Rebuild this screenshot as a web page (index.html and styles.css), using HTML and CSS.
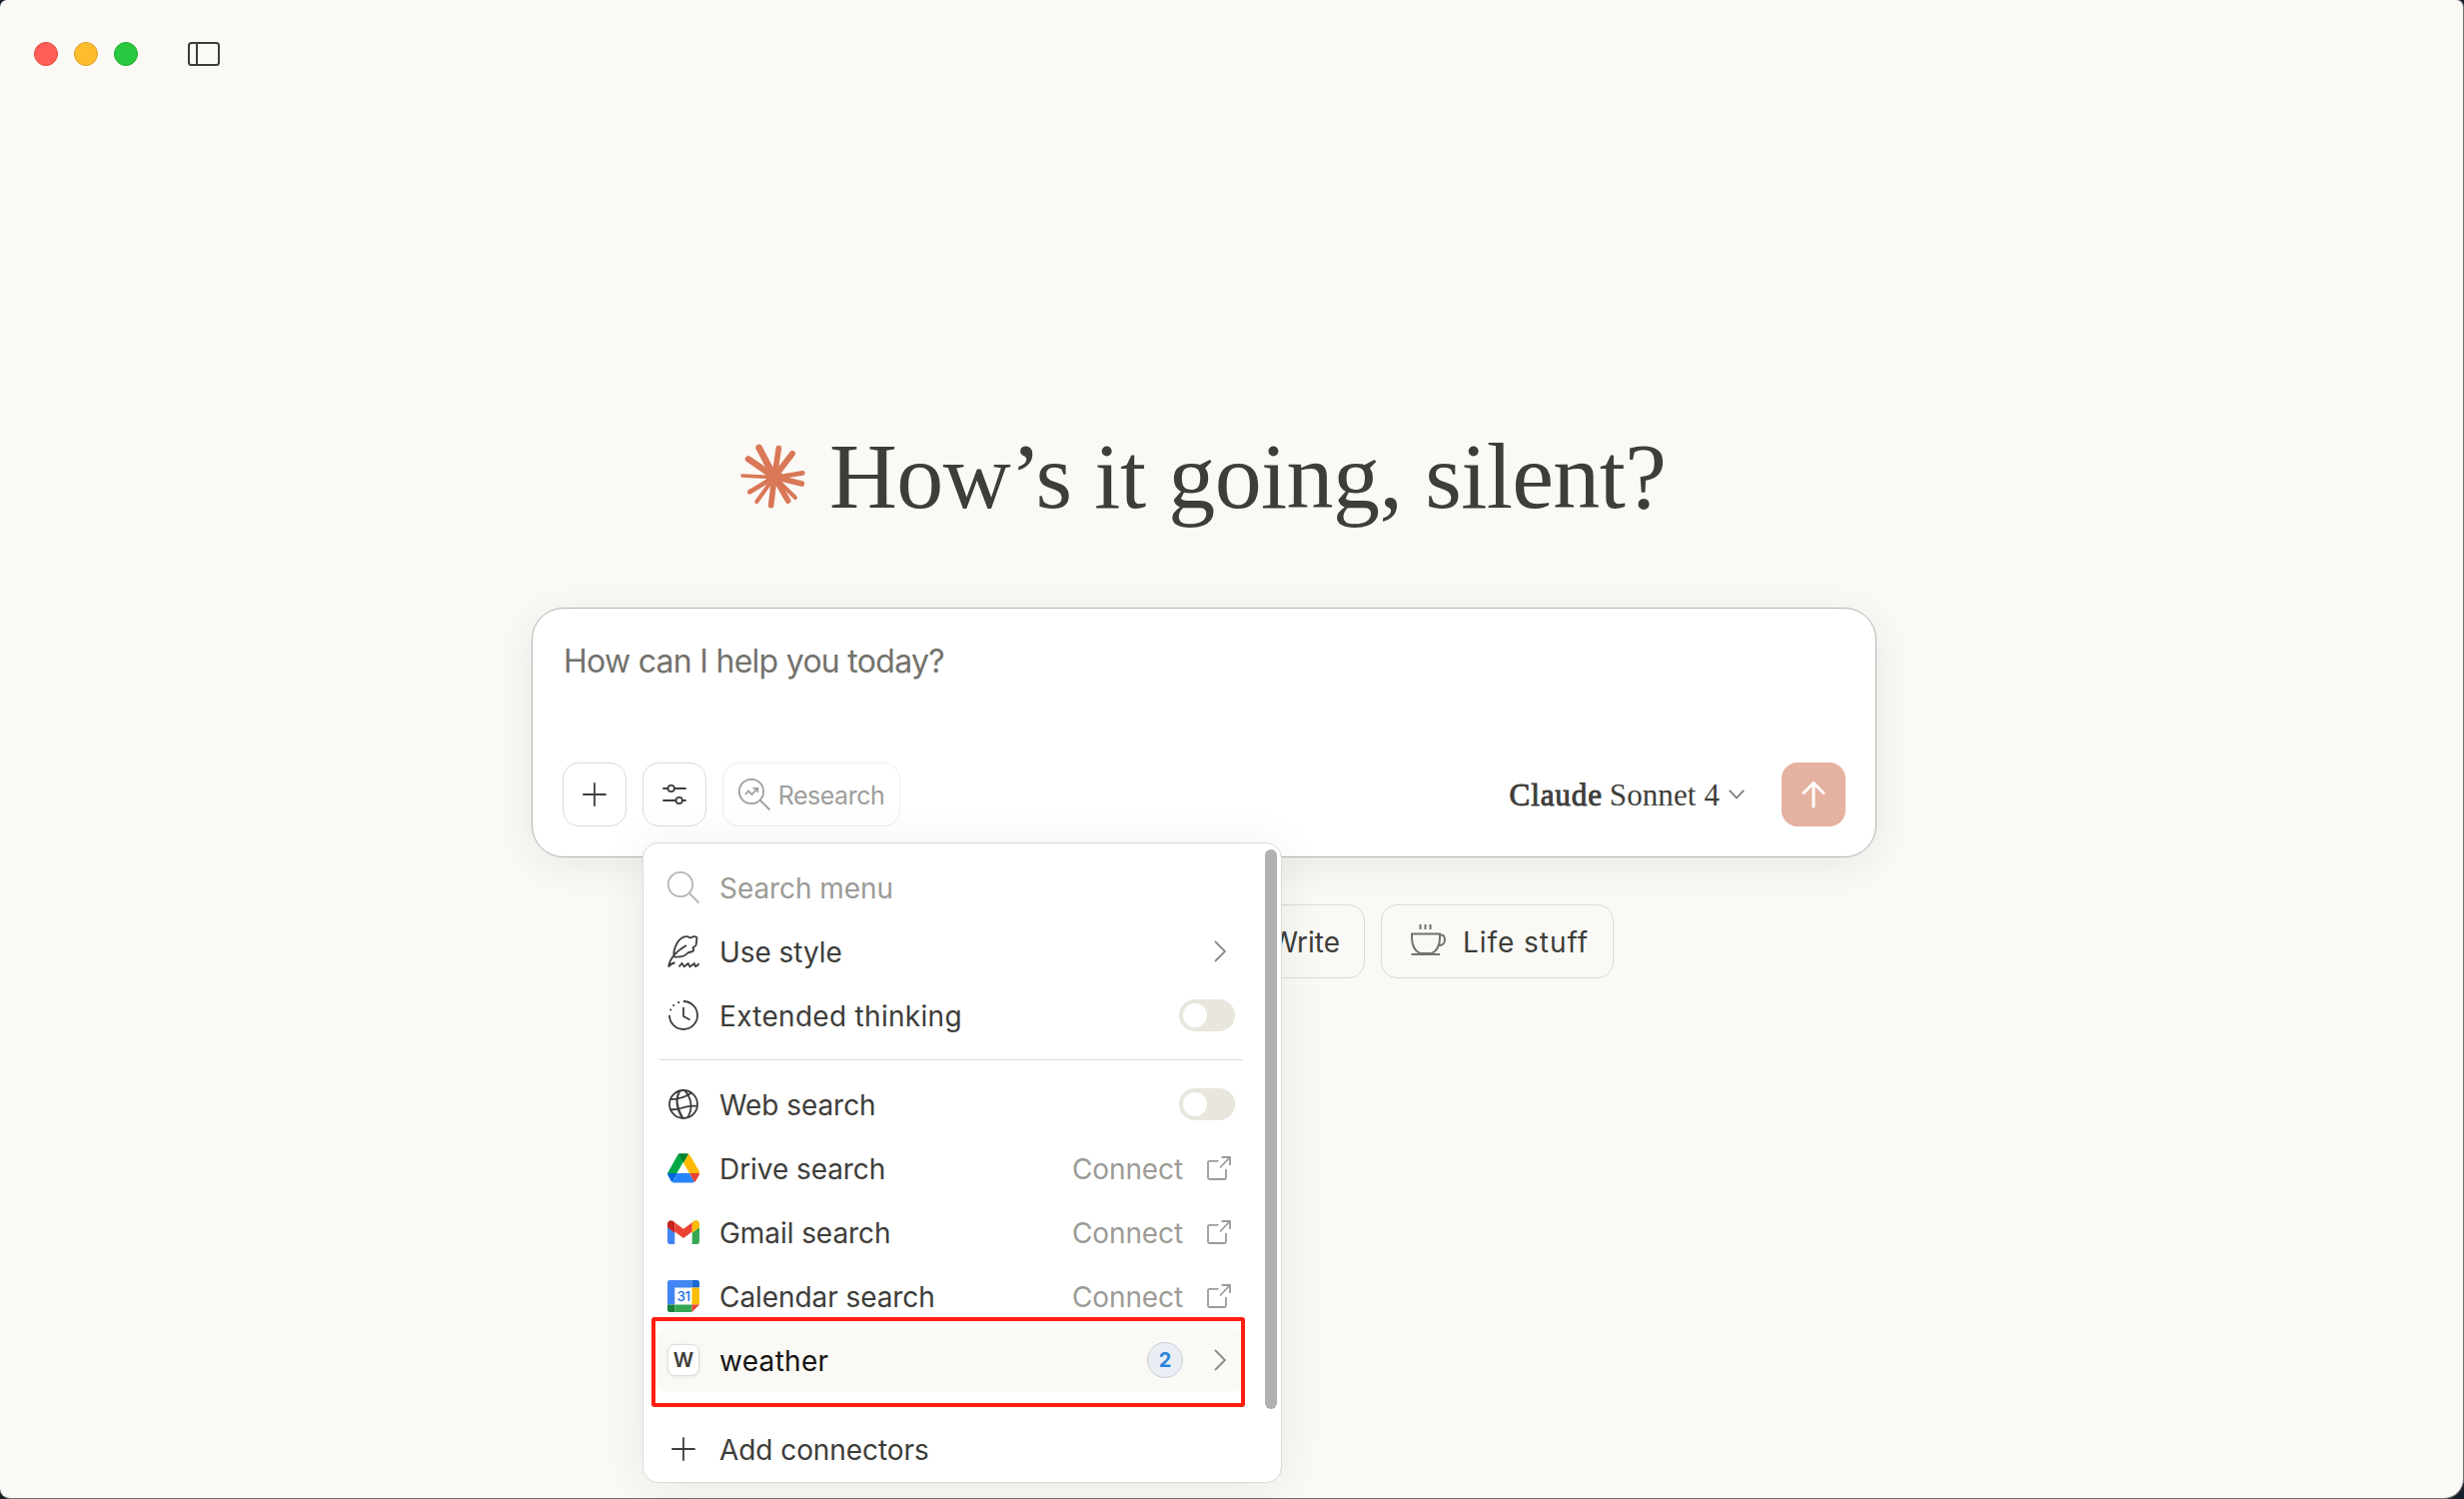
FILE: index.html
```html
<!DOCTYPE html>
<html lang="en">
<head>
<meta charset="utf-8">
<title>Claude</title>
<link rel="stylesheet" href="styles.css">
</head>
<body>
<svg class="defs" aria-hidden="true">
  <symbol id="plus" viewBox="0 0 32 32"><path d="M16 4.300v23.400M4.300 16h23.400"/></symbol>
  <symbol id="chevron" viewBox="0 0 14 24"><path d="M2 2l10 10L2 22"/></symbol>
  <symbol id="external" viewBox="0 0 24 24"><path d="M11.500 4.800H2.500a1.500 1.500 0 0 0-1.500 1.500V21.500A1.500 1.500 0 0 0 2.500 23H17.500a1.500 1.500 0 0 0 1.500-1.500V13M13 11.500L23 1M14.500 1H23V9"/></symbol>
</svg>
<div class="window">
  <header class="titlebar">
    <i class="light red"></i><i class="light yellow"></i><i class="light green"></i>
    <svg class="sidebar-icon" viewBox="0 0 32 24"><rect x="1" y="1" width="30" height="22" rx="2.500"/><path d="M9 1v22"/></svg>
  </header>

  <main class="main">
    <h1 class="greeting">
      <svg class="burst" viewBox="63 72 195 195">
        <g>
          <path stroke-width="20" d="M165 172L119 84"/><path stroke-width="17" d="M165 172L178 86"/>
          <path stroke-width="18" d="M165 172L219 102"/><path stroke-width="14" d="M165 174L250 160"/>
          <path stroke-width="17" d="M165 172L247 192"/><path stroke-width="12" d="M165 172L228 234"/>
          <path stroke-width="17" d="M165 172L206 243"/><path stroke-width="17" d="M165 172L155 257"/>
          <path stroke-width="12" d="M165 172L112 246"/><path stroke-width="14" d="M165 172L91 217"/>
          <path stroke-width="11" d="M165 173L69 168"/><path stroke-width="19" d="M165 172L87 118"/>
        </g>
        <circle cx="165" cy="172" r="25"/>
      </svg>
      <span class="greeting-text">How’s it going, silent?</span>
    </h1>

    <section class="composer">
      <p class="placeholder">How can I help you today?</p>
      <div class="toolbar">
        <button class="tool"><svg class="icon"><use href="#plus"/></svg></button>
        <div class="tool-anchor">
          <button class="tool"><svg class="icon" viewBox="0 0 32 32"><path d="M4.300 10h5M16 10h11.700M4.300 22h13M24 22h3.700"/><circle cx="12.700" cy="10" r="3.200"/><circle cx="20.700" cy="22" r="3.200"/></svg></button>

          <div class="menu">
            <div class="menu-scroll">
              <div class="row search">
                <svg class="icon" viewBox="0 0 32 32"><circle cx="13" cy="13" r="12.200"/><path d="M22 22l9.500 9.500"/></svg>
                <span class="label">Search menu</span>
              </div>
              <div class="row">
                <svg class="icon" viewBox="0 0 32 32"><path d="M1 31.500C2 24 7 17 19 10M1 31.500C3 29 5 27.500 7.500 27.500M6.500 21.500C5.500 13 11 1.500 19 1.200c3-.2 3.200 2.300 5.200.8 2.500-1.700 6-.8 5.200 1.800-.4 1.900-.5 2.800-.6 5.200-.1 2.500-4.300 2.800-3.200 4 1.600 1.500.3 3.200-2 3.500-2.500.3-3 .5-4 1.800-2 2.500-7 3.700-13.100 3.200M11.500 31.300l3-3.400 2.200 3.300 4-3 1.800 3.200 4.300-3.200 1.200 2.800c1.800-.2 2.900-1.300 3.500-2.800"/></svg>
                <span class="label">Use style</span>
                <svg class="chevron"><use href="#chevron"/></svg>
              </div>
              <div class="row">
                <svg class="icon" viewBox="0 0 32 32"><path d="M16 2a14 14 0 1 1-14 14M16 8v9l6.500 3.500"/><path class="dots" d="M3.300 10.500h.01M6.200 6h.01M11.200 3.100h.01"/></svg>
                <span class="label wide">Extended thinking</span>
                <i class="toggle"></i>
              </div>
              <hr class="divider">
              <div class="row">
                <svg class="icon" viewBox="0 0 32 32"><circle cx="16" cy="16" r="14"/><path d="M13 2.300C8 9 8 17 15.500 30M13 2.300C7 9 9 21 15 29.900M17 2c7 7 9 19 3 27.300M3 11c8 0 15-2 21-6.500M2.700 21c6 1 8 0 13-1.700 5-1.600 8-2 13.600-1.500"/></svg>
                <span class="label">Web search</span>
                <i class="toggle"></i>
              </div>
              <div class="row">
                <svg class="logo" viewBox="0 0 32 32"><path fill="#00a846" d="M11 1.800h-.2L0 21h9.400L16 9.500z"/><path fill="#00832d" d="M10.800 1.800L16 10.800l5.200-9c-1-.6-9.400-.6-10.400 0z"/><path fill="#ffba00" d="M21.200 1.800L16 10.800 22 21h10c0-1.200-.3-2-.8-2.900L23 3.800z"/><path fill="#0066da" d="M0 21c0 1.200.3 2 .8 2.800L3.500 28.600c.4.600.8 1 1.400 1.400L10 21z"/><path fill="#2684fc" d="M10 21L4.900 30c.8.400 1.600.5 2.500.5h17.200c1 0 1.800-.2 2.500-.5L22 21z"/><path fill="#ea4335" d="M22 21l5.100 9c.6-.4 1.100-.9 1.400-1.400l2.700-4.800c.5-.8.8-1.600.8-2.800z"/></svg>
                <span class="label">Drive search</span>
                <span class="connect">Connect</span><svg class="external"><use href="#external"/></svg>
              </div>
              <div class="row">
                <svg class="logo" viewBox="0 0 32 32"><path fill="#4285f4" d="M0 11l7.300 5.400V28H2.200C1 28 0 27 0 25.800z"/><path fill="#34a853" d="M32 11l-7.300 5.400V28h5.100c1.200 0 2.200-1 2.200-2.200z"/><path fill="#fbbc04" d="M24.700 6.200v10.600L32 11.200V7.600c0-3.300-3.500-4.800-5.800-2.500z"/><path fill="#c5221f" d="M0 7.600v3.600l7.300 5.600V6.200L5.800 5.100C3.400 3.300 0 4.900 0 7.600z"/><path fill="#ea4335" d="M7.300 6.200L16 12.700l8.700-6.500v9.400L16 22.100l-8.700-6.500z"/></svg>
                <span class="label">Gmail search</span>
                <span class="connect">Connect</span><svg class="external"><use href="#external"/></svg>
              </div>
              <div class="row">
                <svg class="logo" viewBox="0 0 32 32"><path fill="#fff" d="M7 7h18v18H7z"/><path fill="#4285f4" d="M2.300 0H24.500V7.500H7.300V24.500H0V2.300A2.300 2.300 0 0 1 2.300 0z"/><path fill="#1967d2" d="M24.500 0h5.200A2.300 2.300 0 0 1 32 2.300V7.500h-7.500z"/><path fill="#fbbc04" d="M24.500 7.500H32v17h-7.500z"/><path fill="#188038" d="M0 24.500h7.300V32h-5A2.300 2.300 0 0 1 0 29.700z"/><path fill="#34a853" d="M7.300 24.500h17.200V32H7.300z"/><path fill="#ea4335" d="M24.500 24.500H32L24.500 32z"/><text x="16" y="20.800" text-anchor="middle">31</text></svg>
                <span class="label">Calendar search</span>
                <span class="connect">Connect</span><svg class="external"><use href="#external"/></svg>
              </div>
              <div class="row active">
                <span class="avatar">W</span>
                <span class="label wide">weather</span>
                <span class="badge">2</span>
                <svg class="chevron"><use href="#chevron"/></svg>
                <i class="highlight"></i>
              </div>
            </div>
            <div class="row add">
              <svg class="icon"><use href="#plus"/></svg>
              <span class="label">Add connectors</span>
            </div>
            <i class="scrollbar"></i>
          </div>
        </div>
        <button class="tool research">
          <svg class="icon" viewBox="0 0 32 32"><circle cx="13" cy="13" r="12.200"/><path d="M22 22l9.500 9.500M7 16l3-3.500 3.500 3.500L19 10M14.500 9.800H19.300V14"/></svg>
          <span>Research</span>
        </button>
        <div class="model"><b>Claude</b><span>Sonnet 4</span><svg viewBox="0 0 16 10"><path d="M.8.8L8 8.500 15.200.8"/></svg></div>
        <button class="send"><svg viewBox="0 0 24 28"><path d="M12 26V3M2 12.500L12 2.500l10 10"/></svg></button>
      </div>
    </section>

    <div class="chips">
      <div class="chip"><svg class="icon" viewBox="0 0 32 32"><path d="M4 28l3-9L22 4l6 6-15 15z"/></svg><span>Write</span></div>
      <div class="chip life"><svg class="cup" viewBox="0 0 36 34"><path d="M10.500 2v5M15.500 2v5M20.500 2v5M2 11.500H30V15c0 8-3 13.500-8 16H10C5 28.500 2 23 2 15zM1.500 32H30M30 12.500c3.500-.5 5 1.500 5 5s-2.500 6-7 5.500"/></svg><span>Life stuff</span></div>
    </div>
  </main>
</div>
</body>
</html>
```

FILE: styles.css
```css
* { box-sizing: border-box; }
body {
  margin: 0;
  background: #17212b;
  font-family: Inter, "Liberation Sans", sans-serif;
  color: #3d3d3a;
}
.defs { position: absolute; width: 0; height: 0; }
svg { display: block; flex: none; fill: none; stroke: currentColor; stroke-width: 1.8; overflow: visible; }
button { margin: 0; padding: 0; font: inherit; color: inherit; background: none; }

.window {
  width: 2466px;
  height: 1500px;
  overflow: hidden;
  background: #faf9f5;
  border: solid #6f6f6d;
  border-width: 0 1px 1px 0;
  border-radius: 7px 7px 20px 10px;
}
.titlebar { display: flex; align-items: center; gap: 16px; height: 108px; padding-left: 34px; }
.light { width: 24px; height: 24px; border-radius: 50%; border: 1px solid; }
.red { background: #ff5f57; border-color: #e2463f; }
.yellow { background: #febc2e; border-color: #dfa023; }
.green { background: #28c840; border-color: #1dad2b; }
.sidebar-icon { width: 32px; height: 24px; margin-left: 34px; stroke-width: 2; }

.main { width: 1346px; margin: 303px 0 0 532px; }
.greeting { display: flex; align-items: center; height: 130px; margin: 0 0 67px 209px; font-weight: 400; }
.burst { width: 65px; height: 65px; margin-right: 24px; stroke: #d97757; stroke-linecap: round; }
.burst circle { fill: #d97757; stroke: none; }
.greeting-text {
  font-family: "Liberation Serif", serif;
  font-size: 94px;
  line-height: 130px;
  letter-spacing: -.6px;
  white-space: nowrap;
}

.composer {
  height: 250px;
  padding: 31px 30px 30px;
  display: flex;
  flex-direction: column;
  justify-content: space-between;
  background: #fff;
  border: 1px solid #b4b3af;
  border-radius: 32px;
  box-shadow: 0 8px 40px rgba(0, 0, 0, .075);
}
.placeholder { margin: 0 0 0 1px; font-size: 32px; line-height: 44px; color: #73726c; letter-spacing: -.72px; }
.toolbar { display: flex; align-items: center; gap: 16px; }
.tool { display: flex; align-items: center; justify-content: center; width: 64px; height: 64px; border: 1px solid #dcdcda; border-radius: 16px; }
.icon, .logo { width: 32px; height: 32px; }
.logo { stroke: none; }
.logo text { font-size: 13.5px; font-weight: 500; fill: #1a73e8; letter-spacing: -.6px; }
.research { width: 178px; gap: 8px; border-color: #eeeeed; color: #9e9e9c; font-size: 25px; letter-spacing: -.5px; }
.research span { padding-top: 1px; }

.model { display: flex; align-items: center; gap: 7px; margin-left: auto; margin-right: 21px; font-family: "Liberation Serif", serif; font-size: 31px; line-height: 62px; padding-top: 2px; }
.model b { font-weight: 400; -webkit-text-stroke: .9px currentColor; letter-spacing: .9px; }
.model span { letter-spacing: .1px; }
.model svg { width: 16px; height: 10px; color: #7b7b78; margin: -2px 0 0 2px; }
.send { display: flex; align-items: center; justify-content: center; width: 64px; height: 64px; border: 0; border-radius: 16px; background: #e5b1a0; color: #fff; }
.send svg { width: 24px; height: 28px; stroke-width: 3; stroke-linecap: round; }

.tool-anchor { position: relative; }
.menu {
  position: absolute;
  z-index: 2;
  top: 80px;
  left: 0;
  width: 640px;
  height: 641px;
  padding: 12px 38px 0 12px;
  background: #fff;
  border: 1px solid #dbdad7;
  border-radius: 16px;
  box-shadow: 0 4px 48px rgba(0, 0, 0, .07);
}
.row { display: flex; align-items: center; height: 64px; padding: 0 8px 0 12px; border-radius: 10px; font-size: 28px; }
.label { margin-left: 20px; margin-right: auto; padding-top: 1px; letter-spacing: -.07px; white-space: nowrap; }
.label.wide { letter-spacing: .3px; }
.search .icon { color: #b5b5b2; }
.search .label { color: #9c9b96; }
.dots { stroke-width: 2.2; stroke-linecap: round; }
.chevron { width: 14px; height: 24px; margin-right: 8px; color: #8b8b87; }
.toggle { width: 56px; height: 32px; padding: 4px; border-radius: 16px; background: #e8e6dd; }
.toggle::before { content: ""; display: block; width: 24px; height: 24px; border-radius: 50%; background: #fff; }
.divider { height: 1px; margin: 12px 0 12px 4px; border: 0; background: #dadad8; }
.connect { padding-top: 1px; color: #9c9b96; letter-spacing: -.1px; margin-right: 24px; }
.external { width: 24px; height: 24px; margin-right: 4px; color: #9c9b96; }
.active { position: relative; background: #faf9f5; color: #141413; }
.avatar { width: 32px; height: 32px; border: 1px solid #dedddb; border-radius: 8px; background: #fff; box-shadow: 0 1px 4px rgba(0,0,0,.08); color: #3d3d3a; font-size: 20px; font-weight: 600; line-height: 30px; text-align: center; }
.badge { width: 36px; height: 36px; margin-right: 30px; border: 1px solid #c9cdd1; border-radius: 50%; background: #e9eef5; color: #2c84db; font-size: 20px; font-weight: 700; line-height: 35px; text-align: center; }
.highlight { position: absolute; top: -11px; left: -4px; width: 594px; height: 90px; border: 4px solid #ff1e10; border-radius: 3px; }
.add { margin-top: 25px; }
.scrollbar { position: absolute; top: 6px; right: 4px; width: 12px; height: 560px; border-radius: 6px; background: #b0b0b0; }

.chips { display: flex; justify-content: flex-end; gap: 16px; margin: 47px 263px 0 0; }
.chip { display: flex; align-items: center; gap: 18px; height: 74px; padding: 0 24px 0 28px; border: 1px solid #dbdad6; border-radius: 16px; font-size: 28px; white-space: nowrap; }
.chip span { padding-top: 1px; }
.life { width: 233px; gap: 17px; padding-right: 0; letter-spacing: .95px; }
.cup { width: 36px; height: 34px; margin-top: -4px; color: #73726c; stroke-width: 2; }
```
